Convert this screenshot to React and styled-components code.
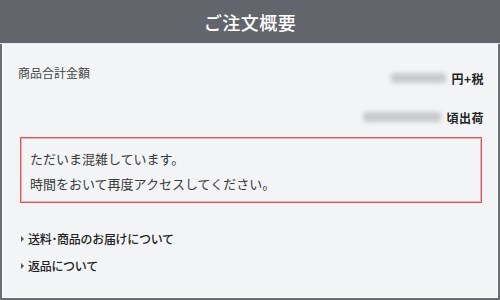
import React from 'react'
import styled, { createGlobalStyle } from 'styled-components'

const GlobalStyle = createGlobalStyle`
  html, body {
    margin: 0;
    padding: 0;
    background: #ffffff;
  }
  body {
    font-family: "Noto Sans CJK JP", "Noto Sans", sans-serif;
  }
`

const Frame = styled.section`
  box-sizing: border-box;
  width: 500px;
  height: 300px;
  border: 2px solid #6c6d73;
  border-top: none;
  background: #f3f4f6;
  box-shadow: inset 1px 0 0 #ffffff, inset -1px 0 0 #ffffff, inset 0 -1px 0 #ffffff;
  display: flex;
  flex-direction: column;
`

const Header = styled.h1`
  margin: 0 -2px;
  height: 43px;
  background: #63656d;
  border-bottom: 1px solid #e6e7ea;
  color: #ffffff;
  font-size: 18px;
  font-weight: 500;
  letter-spacing: 0.5px;
  display: flex;
  align-items: center;
  justify-content: center;
`

const Body = styled.div`
  padding: 21px 14px 0 16px;
  display: flex;
  flex-direction: column;
`

const Label = styled.div`
  font-size: 12px;
  line-height: 16px;
  color: #444;
`

const ValueRow = styled.div`
  display: flex;
  justify-content: flex-end;
  align-items: center;
  gap: 5px;
  height: 16px;
  margin-top: ${({ $gap }) => $gap}px;
`

const Blur = styled.span`
  display: block;
  width: ${({ $w }) => $w}px;
  height: 10px;
  background: #c9cacd;
  border-radius: 3px;
  filter: blur(2px);
`

const Unit = styled.span`
  font-size: 12px;
  font-weight: 700;
  color: #222;
  letter-spacing: 0.5px;
`

const Notice = styled.div`
  margin: 12px 2px 0 2px;
  box-sizing: border-box;
  height: 66px;
  border: 1px solid #d9575c;
  box-shadow: inset 0 0 0 1px #efb3b5;
  padding: 8px 9px 0;
  font-size: 13px;
  line-height: 25px;
  color: #3a3a3a;
`

const Links = styled.ul`
  list-style: none;
  margin: 28px 0 0 3px;
  padding: 0;
  display: flex;
  flex-direction: column;
  gap: 11px;
`

const LinkItem = styled.li`
  display: flex;
  align-items: center;
  gap: 4px;
  font-size: 12px;
  line-height: 16px;
  font-weight: 500;
  color: #222;
  letter-spacing: -0.3px;

  &::before {
    content: "";
    width: 0;
    height: 0;
    border-top: 3px solid transparent;
    border-bottom: 3px solid transparent;
    border-left: 3px solid #555;
  }
`

const App = () => {
  return (
    <>
      <GlobalStyle />
      <Frame>
        <Header>ご注文概要</Header>
        <Body>
          <Label>商品合計金額</Label>
          <ValueRow $gap={-11}>
            <Blur $w={55} />
            <Unit>円+税</Unit>
          </ValueRow>
          <ValueRow $gap={23}>
            <Blur $w={78} />
            <Unit>頃出荷</Unit>
          </ValueRow>
          <Notice>
            ただいま混雑しています。
            <br />
            時間をおいて再度アクセスしてください。
          </Notice>
          <Links>
            <LinkItem>送料･商品のお届けについて</LinkItem>
            <LinkItem>返品について</LinkItem>
          </Links>
        </Body>
      </Frame>
    </>
  )
}

export default App
